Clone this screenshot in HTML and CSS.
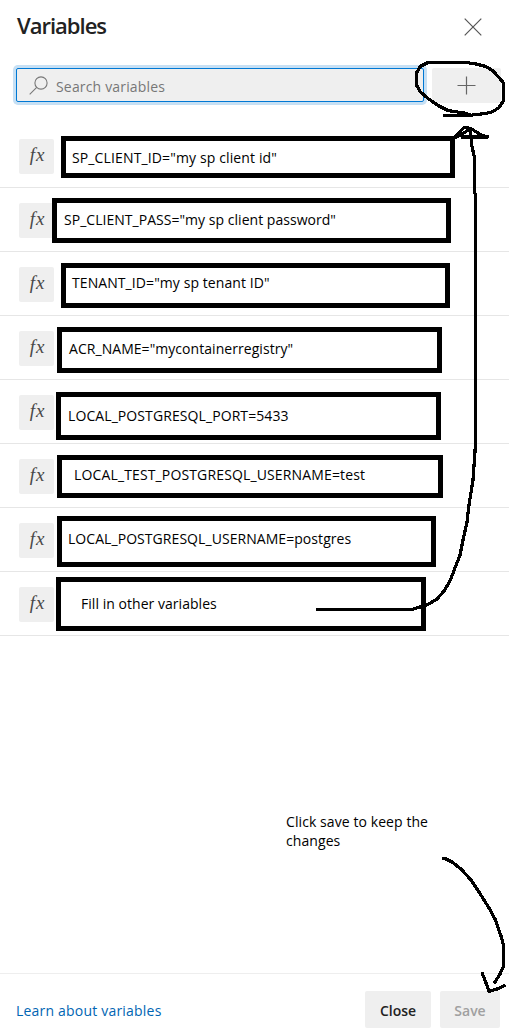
FILE: index.html
```html
<!DOCTYPE html>
<html lang="en">
<head>
<meta charset="utf-8">
<title>Variables</title>
<link rel="stylesheet" href="styles.css">
</head>
<body>
<main class="panel">
  <header class="header">
    <h1 class="title">Variables</h1>
    <svg class="close-icon" width="18" height="18" viewBox="0 0 18 18"><path d="M.7.7 17.3 17.3M17.3.7.7 17.3"/></svg>
  </header>
  <div class="toolbar">
    <div class="search">
      <svg class="search-icon" width="19" height="19" viewBox="0 0 19 19"><circle cx="12" cy="7" r="6.1"/><path d="M7.7 11.3.7 18.3"/></svg>
      <span class="placeholder">Search variables</span>
    </div>
    <div class="add"><svg class="plus-icon" width="19" height="19" viewBox="0 0 19 19"><path d="M.5 9.5h18M9.5.5v18"/></svg></div>
  </div>
  <ul class="list">
    <li class="row"><span class="fx">fx</span><div class="box box-1"><span class="label">SP_CLIENT_ID="my sp client id"</span></div></li>
    <li class="row"><span class="fx">fx</span><div class="box box-2"><span class="label">SP_CLIENT_PASS="my sp client password"</span></div></li>
    <li class="row"><span class="fx">fx</span><div class="box box-3"><span class="label">TENANT_ID="my sp tenant ID"</span></div></li>
    <li class="row"><span class="fx">fx</span><div class="box box-4"><span class="label">ACR_NAME="mycontainerregistry"</span></div></li>
    <li class="row"><span class="fx">fx</span><div class="box box-5"><span class="label">LOCAL_POSTGRESQL_PORT=5433</span></div></li>
    <li class="row"><span class="fx">fx</span><div class="box box-6"><span class="label">LOCAL_TEST_POSTGRESQL_USERNAME=test</span></div></li>
    <li class="row"><span class="fx">fx</span><div class="box box-7"><span class="label">LOCAL_POSTGRESQL_USERNAME=postgres</span></div></li>
    <li class="row"><span class="fx">fx</span><div class="box box-8"><span class="label">Fill in other variables</span></div></li>
  </ul>
  <p class="note">Click save to keep the<br>changes</p>
  <footer class="footer">
    <a class="learn">Learn about variables</a>
    <button class="btn btn-close">Close</button>
    <button class="btn btn-save">Save</button>
  </footer>
  <svg class="ink" width="509" height="1035" viewBox="0 0 509 1035">
    <path d="M443 115.500H472L464 113 448 110.500 439 106 428 98.500 420 91.500 416.500 85V73L420 66.500 427 63 432 62.500H466L476 64 486 66.500 493 71 499 77.500 503.500 83V101L499 107.500 493 111.500 486 113.500 472 115"/>
    <path d="M316 609.500H412L420 607 428 604.500 437 599 444 591 450 581 455 568 460 555 463 540 467 522 469 505 473 480 475.500 444V194L474.500 193V158L471.500 144 470.500 130 468 127.500H464L453 139M461 137H488L481 135 471 128.500 462 134 453 139"/>
    <path d="M441.500 858.500H445L452 862 461 869 471 880 479 892 489 908 495 919 501 936 503.500 945V966L500 974 494 983.500M482.500 971.500V974L486 983 489 991.500 497 989 505.500 985"/>
  </svg>
</main>
</body>
</html>
```
FILE: styles.css
```css
* { box-sizing: border-box; }
body { margin: 0; background: #fff; color: #000; font-family: "Open Sans", "Noto Sans", sans-serif; }
.panel { position: relative; display: flex; flex-direction: column; width: 509px; height: 1035px; overflow: hidden; }
.header { display: flex; justify-content: space-between; height: 68px; padding: 10px 27px 0 17px; }
.title { margin: 0; font-size: 22px; line-height: 30px; font-weight: 550; letter-spacing: -1px; color: #222; }
.close-icon { margin-top: 8px; fill: none; stroke: #555; stroke-width: 1.2; }
.toolbar { display: flex; gap: 8px; height: 56px; padding-left: 16px; }
.search { display: flex; align-items: center; width: 408px; height: 34px; padding-left: 12px; border: 1px solid #0078d4; border-radius: 2px; background: #efefef; box-shadow: 0 0 0 3px #c7e0f4; }
.search-icon { fill: none; stroke: #777; stroke-width: 1.1; }
.placeholder { margin: 2px 0 0 8px; font-size: 14px; letter-spacing: 0.17px; color: #777; }
.add { display: flex; align-items: center; justify-content: center; width: 69px; height: 35px; border-radius: 2px; background: #efefef; }
.plus-icon { fill: none; stroke: #666; stroke-width: 1.2; }
.list { margin: 0; padding: 0; list-style: none; }
.row { display: flex; align-items: flex-start; height: 64px; padding-left: 19px; border-bottom: 1px solid #e6e6e6; }
.fx { flex: none; width: 35px; height: 35px; margin-top: 15px; padding-left: 2px; border-radius: 2px; background: #efefef; color: #484848; font: italic 19px/32px "Liberation Serif", serif; letter-spacing: 1px; text-align: center; }
.box { border: 5px solid #000; background: #fff; font-size: 14px; line-height: 18px; white-space: nowrap; }
.label { display: block; }
.box-1 { width: 394px; height: 42px; margin: 12px 0 0 7px; padding: 8px 0 0 6px; letter-spacing: 0.13px; }
.box-2 { width: 399px; height: 45px; margin: 10px 0 0 -2px; padding: 8px 0 0 7px; letter-spacing: 0.03px; }
.box-3 { width: 389px; height: 45px; margin: 11px 0 0 7px; padding: 6px 0 0 6px; letter-spacing: 0.08px; }
.box-4 { width: 385px; height: 46px; margin: 11px 0 0 3px; padding: 8px 0 0 7px; letter-spacing: 0.05px; }
.box-5 { width: 385px; height: 48px; margin: 12px 0 0 2px; padding: 10px 0 0 7px; letter-spacing: 0.09px; }
.box-6 { width: 386px; height: 43px; margin: 11px 0 0 3px; padding: 6px 0 0 12px; letter-spacing: 0.14px; }
.box-7 { width: 379px; height: 51px; margin: 8px 0 0 3px; padding: 9px 0 0 6px; letter-spacing: 0.06px; }
.box-8 { width: 370px; height: 54px; margin: 5px 0 0 2px; padding: 13px 0 0 20px; letter-spacing: 0.04px; }
.note { margin: 176px 0 0 286px; font-size: 14px; line-height: 19px; letter-spacing: 0.08px; }
.footer { display: flex; align-items: flex-start; height: 62px; margin-top: auto; padding: 17px 9px 0 16px; border-top: 1px solid #eee; }
.learn { flex: 1; padding-top: 10px; font-size: 14px; line-height: 20px; letter-spacing: 0.2px; color: #0065b3; }
.btn { height: 37px; margin: 0; padding: 2px 0 0; border: 0; border-radius: 2px; background: #efefef; font-family: inherit; font-size: 14px; font-weight: 550; color: #222; }
.btn-close { width: 66px; }
.btn-save { width: 60px; margin-left: 9px; color: #a0a0a0; }
.ink { position: absolute; left: 0; top: 0; fill: none; stroke: #000; stroke-width: 3.2; stroke-linejoin: round; shape-rendering: crispEdges; pointer-events: none; }
```
